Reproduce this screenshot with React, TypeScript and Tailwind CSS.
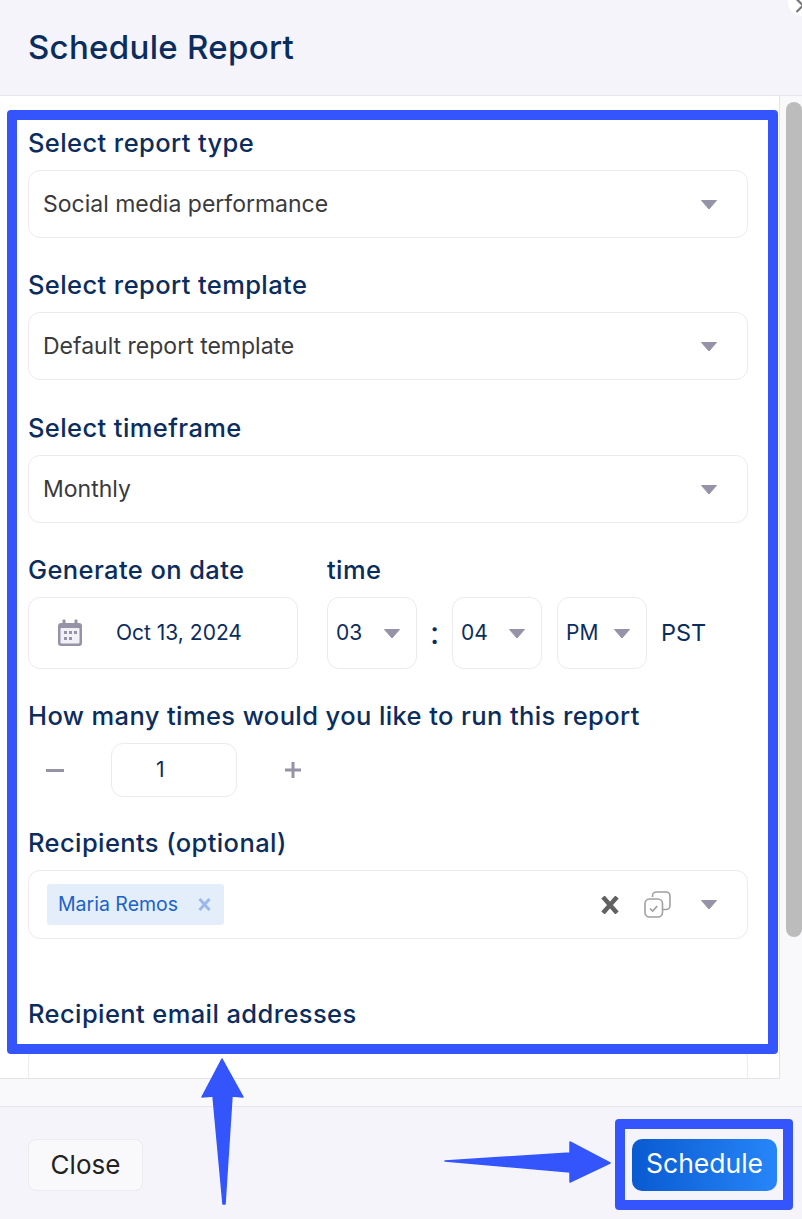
import type { ReactNode } from 'react'

const Caret = ({ className = '' }: { className?: string }) => (
  <svg width="18" height="11" viewBox="0 0 18 11" className={className}>
    <path d="M1.5 1.5h15L9 10z" fill="#9593a8" stroke="#9593a8" strokeLinejoin="round" />
  </svg>
)

function Label({ children }: { children: ReactNode }) {
  return <div className="h-7 text-[25.5px] font-[450] leading-7 tracking-[0.4px] text-[#0b2d5e] whitespace-nowrap">{children}</div>
}

function Select({ value, className = 'mb-[33px]' }: { value: string; className?: string }) {
  return (
    <div className={`mt-[13px] ${className} h-[68px] flex items-center justify-between pl-[14px] pr-[29px] rounded-xl border border-[#ebebef] bg-white`}>
      <span className="text-[23px] text-[#3a3a3c]">{value}</span>
      <Caret />
    </div>
  )
}

function TimeBox({ value, width = 'w-[90px]' }: { value: string; width?: string }) {
  return (
    <div className={`${width} h-[72px] flex items-center justify-between pl-2 pr-[15px] rounded-xl border border-[#ebebef] text-[21px] text-[#0b2d5e]`}>
      <span>{value}</span>
      <Caret />
    </div>
  )
}

export default function App() {
  return (
    <div className="relative w-[802px] h-[1219px] overflow-hidden flex flex-col bg-[#f4f4fa] font-['Inter',sans-serif]">
      <header className="h-24 shrink-0 flex items-center pl-7 border-b border-[#e6e6ec] bg-[#f4f4fa]">
        <h1 className="text-[33px] font-[450] text-[#0b2d5e] tracking-[0.3px]">Schedule Report</h1>
      </header>
      <div className="absolute top-0 right-0 w-[14px] h-[16px] rounded-bl-full bg-white flex justify-end">
        <svg width="12" height="14" viewBox="0 0 12 14">
          <path d="M13 5.5L6.5 12M13 5.5L6.5 -1" stroke="#777" strokeWidth="2.2" fill="none" />
        </svg>
      </div>

      <div className="h-[983px] shrink-0 flex bg-[#f9f9fc]">
        <main className="w-[780px] h-full overflow-hidden bg-white border-r border-b border-[#e3e3e8] pl-7 pr-[31px] pt-[33px]">
          <Label>Select report type</Label>
          <Select value="Social media performance" />
          <Label>Select report template</Label>
          <Select value="Default report template" className="mb-[34px]" />
          <Label>Select timeframe</Label>
          <Select value="Monthly" />

          <div className="flex gap-[29px]">
            <div className="w-[270px]"><Label>Generate on date</Label></div>
            <Label>time</Label>
          </div>
          <div className="mt-[13px] mb-[33px] flex items-center">
            <div className="w-[270px] h-[72px] flex items-center pl-[28px] rounded-xl border border-[#ebebef] text-[21px] text-[#0b2d5e]">
              <svg width="26" height="28" viewBox="0 0 26 28" className="mr-[33px]">
                <rect x="1" y="4" width="24" height="23" rx="3" fill="#9593a5" />
                <rect x="5.5" y="0.5" width="3" height="6" rx="1" fill="#9593a5" />
                <rect x="17.5" y="0.5" width="3" height="6" rx="1" fill="#9593a5" />
                <rect x="3.5" y="9" width="19" height="15.5" rx="1" fill="#f1f1f5" />
                <g fill="#9593a5">
                  <rect x="7" y="12" width="3" height="3" /><rect x="12" y="12" width="3" height="3" /><rect x="17" y="12" width="3" height="3" />
                  <rect x="7" y="18" width="3" height="3" /><rect x="12" y="18" width="3" height="3" />
                </g>
              </svg>
              <span>Oct 13, 2024</span>
            </div>
            <div className="ml-[29px]"><TimeBox value="03" /></div>
            <div className="w-[35px] text-center text-[32px] leading-none text-[#0b2d5e]">:</div>
            <TimeBox value="04" />
            <div className="ml-[15px]"><TimeBox value="PM" /></div>
            <span className="ml-[14px] text-[23.5px] text-[#0b2d5e]">PST</span>
          </div>

          <Label>How many times would you like to run this report</Label>
          <div className="mt-[13px] mb-8 flex items-center">
            <div className="w-[83px] pl-[18px]"><div className="w-[18px] h-[3px] bg-[#9593a5]" /></div>
            <div className="w-[126px] h-[54px] flex items-center pl-[44px] rounded-xl border border-[#ebebef] text-[21px] text-[#0b2d5e]">1</div>
            <svg width="18" height="18" viewBox="0 0 18 18" className="ml-[47px]">
              <path d="M9 1v16M1 9h16" stroke="#9593a5" strokeWidth="3" />
            </svg>
          </div>

          <Label>Recipients (optional)</Label>
          <div className="mt-[13px] mb-[61px] h-[69px] flex items-center pl-[18px] pr-[29px] rounded-xl border border-[#ebebef]">
            <div className="w-[177px] h-[41px] flex items-center pl-[11px] rounded-[3px] bg-[#e4eefb] text-[19.5px] text-[#1a62c9]">
              Maria Remos
              <svg width="13" height="13" viewBox="0 0 13 13" className="ml-auto mr-[13px]">
                <path d="M1.5 1l10 11M11.5 1l-10 11" stroke="#9db9ea" strokeWidth="3" />
              </svg>
            </div>
            <svg width="18" height="18" viewBox="0 0 18 18" className="ml-auto">
              <path d="M2 1l14 16M16 1l-14 16" stroke="#616161" strokeWidth="4.5" />
            </svg>
            <svg width="27" height="27" viewBox="0 0 27 27" className="ml-[25px]" fill="none" stroke="#a0a0a4" strokeWidth="1.6">
              <path d="M8.5 6V5a4 4 0 0 1 4-4H22a4 4 0 0 1 4 4v9.5a4 4 0 0 1-4 4h-3" />
              <rect x="1" y="8" width="17.5" height="18" rx="4.5" />
              <path d="M6 17.5l2.6 2.6 4.6-5" />
            </svg>
            <Caret className="ml-[29px]" />
          </div>

          <Label>Recipient email addresses</Label>
          <div className="mt-[18px] h-[80px] rounded-xl border border-[#ebebef]" />
        </main>
        <div className="flex-1 pt-[6px] pl-[6px]">
          <div className="h-[835px] rounded-l-lg rounded-r-lg bg-[#bcbcbc]" />
        </div>
      </div>

      <div className="h-[28px] shrink-0 border-b border-[#e6e6ec] bg-[#f9f9fc]" />
      <footer className="flex-1 flex items-start justify-between pt-8 pl-7 pr-[25px]">
        <button className="w-[115px] h-[52px] pb-[2px] rounded-lg border border-[#ebebf0] bg-[#f9f9fb] text-[26px] text-[#222]">Close</button>
        <button className="w-[145px] h-[52px] pb-[2px] rounded-[10px] bg-gradient-to-r from-[#0a5ad0] to-[#2686f9] text-[26.5px] text-white">Schedule</button>
      </footer>

      {/* annotations */}
      <div className="absolute left-[7px] top-[110px] w-[771px] h-[944px] rounded border-[10px] border-[#3355fb]" />
      <div className="absolute left-[615px] top-[1119px] w-[178px] h-[91px] rounded border-[10px] border-[#3355fb]" />
      <svg width="802" height="1219" viewBox="0 0 802 1219" className="absolute inset-0 pointer-events-none">
        <path d="M222 1059L243 1097 232 1096 225 1204h-2L213 1096 202 1097z" fill="#3355fb" stroke="#3355fb" strokeLinejoin="round" strokeWidth="1.5" />
        <path d="M445 1161L570 1153V1142L610 1163 570 1182V1172z" fill="#3355fb" stroke="#3355fb" strokeLinejoin="round" strokeWidth="1.5" />
      </svg>
    </div>
  )
}
